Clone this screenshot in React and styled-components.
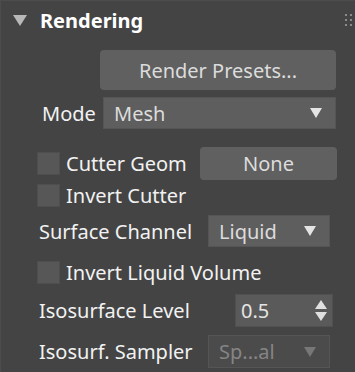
import React from 'react'
import styled, { createGlobalStyle } from 'styled-components'

const Global = createGlobalStyle`
  html, body {
    margin: 0;
    padding: 0;
    background: #444444;
  }
  body {
    font-family: "Noto Sans", "Open Sans", sans-serif;
  }
`

const Panel = styled.div`
  width: 355px;
  height: 372px;
  box-sizing: border-box;
  background: #444444;
  border-left: 1px solid #4c4c4c;
  border-top: 1px solid #4c4c4c;
  position: relative;
  overflow: hidden;
`

const Header = styled.div`
  display: flex;
  align-items: center;
  height: 38px;
  padding-left: 12px;
`

const Caret = styled.span`
  width: 0;
  height: 0;
  border-left: 7px solid transparent;
  border-right: 7px solid transparent;
  border-top: 11px solid #b8b8b8;
  margin-right: 13px;
  margin-top: 1px;
`

const Title = styled.span`
  color: #ffffff;
  font-weight: bold;
  font-size: 20px;
`

const Grip = styled.div`
  position: absolute;
  right: 3px;
  top: 13px;
  display: grid;
  grid-template-columns: repeat(2, 2px);
  gap: 3px;
  span {
    width: 2px;
    height: 2px;
    background: #8a8a8a;
  }
`

const Body = styled.div`
  display: flex;
  flex-direction: column;
`

const Row = styled.div`
  display: flex;
  align-items: center;
  height: ${p => p.h || 32}px;
  margin-top: ${p => p.mt || 0}px;
  padding-left: ${p => p.pl || 0}px;
`

const Button = styled.div`
  box-sizing: border-box;
  width: ${p => p.w}px;
  height: ${p => p.h}px;
  background: #606060;
  border-radius: 4px;
  color: #dcdcdc;
  font-size: 20px;
  display: flex;
  align-items: center;
  justify-content: center;
`

const Label = styled.span`
  color: #f2f2f2;
  font-size: 20px;
  width: ${p => (p.w ? p.w + 'px' : 'auto')};
  flex-shrink: 0;
  white-space: nowrap;
`

const Select = styled.div`
  box-sizing: border-box;
  width: ${p => p.w}px;
  height: ${p => p.h}px;
  background: ${p => (p.disabled ? '#4b4b4b' : '#5e5e5e')};
  border: 1px solid #555555;
  color: ${p => (p.disabled ? '#858585' : '#dcdcdc')};
  font-size: 20px;
  display: flex;
  align-items: center;
  padding-left: 10px;
  padding-right: 13px;
  justify-content: space-between;
`

const Arrow = styled.span`
  width: 0;
  height: 0;
  border-left: 6px solid transparent;
  border-right: 6px solid transparent;
  border-top: 10px solid ${p => (p.disabled ? '#777777' : '#e4e4e4')};
`

const Check = styled.span`
  box-sizing: border-box;
  width: 23px;
  height: 23px;
  background: #575757;
  border: 1px solid #4e4e4e;
  margin-right: 6px;
  flex-shrink: 0;
`

const Spinner = styled.div`
  box-sizing: border-box;
  width: 98px;
  height: 33px;
  background: #5a5a5a;
  border: 1px solid #505050;
  color: #e4e4e4;
  font-size: 20px;
  display: flex;
  align-items: center;
  justify-content: space-between;
  padding-left: 5px;
  padding-right: 5px;
`

const Steps = styled.span`
  display: flex;
  flex-direction: column;
  gap: 3px;
  i {
    width: 0;
    height: 0;
    border-left: 6px solid transparent;
    border-right: 6px solid transparent;
  }
  i:first-child { border-bottom: 9px solid #e0e0e0; }
  i:last-child { border-top: 9px solid #e0e0e0; }
`

export default function App() {
  return (
    <>
      <Global />
      <Panel>
        <Header>
          <Caret />
          <Title>Rendering</Title>
        </Header>
        <Grip>
          <span /><span /><span /><span /><span /><span />
        </Grip>
        <Body>
          <Row h={40} mt={11} pl={99}>
            <Button w={236} h={40}>Render Presets...</Button>
          </Row>
          <Row h={32} mt={7} pl={41}>
            <Label w={61}>Mode</Label>
            <Select w={233} h={32}>
              <span>Mesh</span>
              <Arrow />
            </Select>
          </Row>
          <Row h={33} mt={18} pl={36}>
            <Check />
            <Label w={134}>Cutter Geom</Label>
            <Button w={137} h={33}>None</Button>
          </Row>
          <Row h={25} mt={3} pl={36}>
            <Check />
            <Label>Invert Cutter</Label>
          </Row>
          <Row h={32} mt={7} pl={38}>
            <Label w={169}>Surface Channel</Label>
            <Select w={122} h={32}>
              <span>Liquid</span>
              <Arrow />
            </Select>
          </Row>
          <Row h={25} mt={13} pl={36}>
            <Check />
            <Label>Invert Liquid Volume</Label>
          </Row>
          <Row h={33} mt={9} pl={38}>
            <Label w={196}>Isosurface Level</Label>
            <Spinner>
              <span>0.5</span>
              <Steps><i /><i /></Steps>
            </Spinner>
          </Row>
          <Row h={33} mt={8} pl={38}>
            <Label w={169}>Isosurf. Sampler</Label>
            <Select w={122} h={33} disabled>
              <span>Sp...al</span>
              <Arrow disabled />
            </Select>
          </Row>
        </Body>
      </Panel>
    </>
  )
}
